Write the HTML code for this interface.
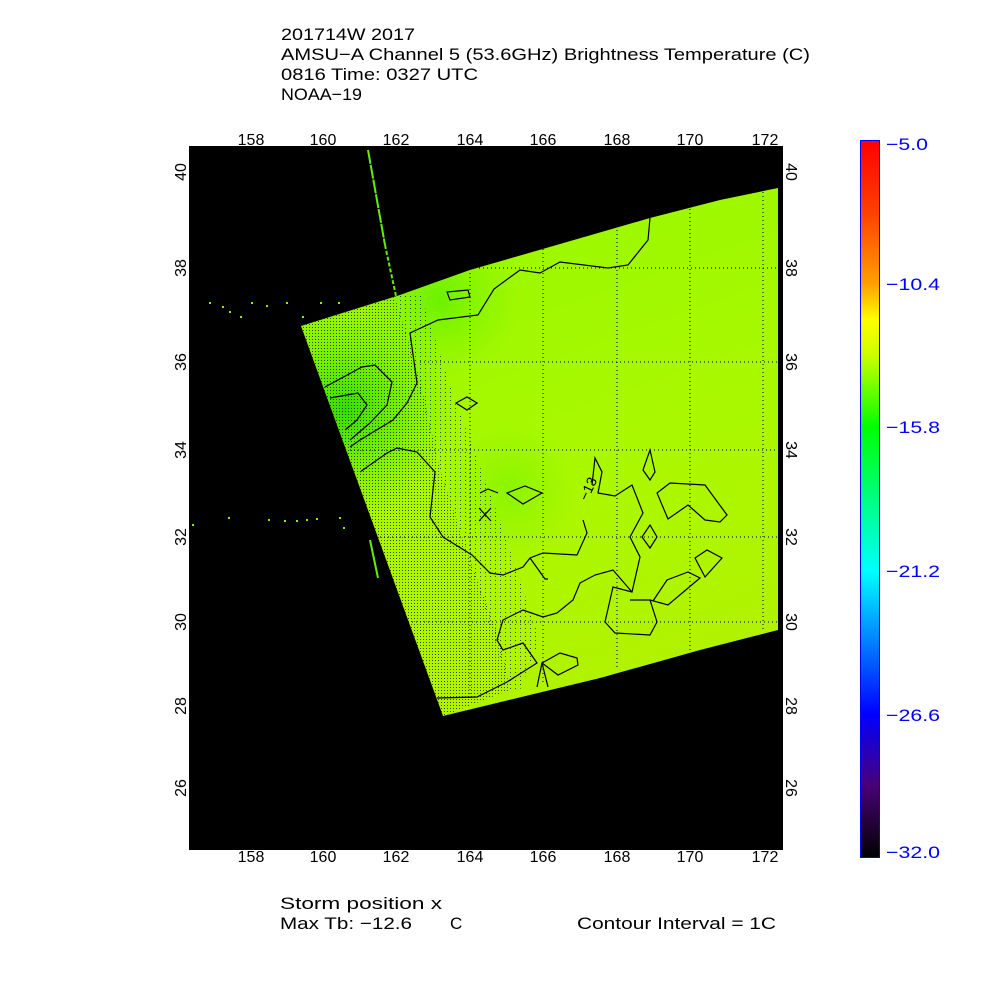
<!DOCTYPE html>
<html><head><meta charset="utf-8"><style>
html,body{margin:0;padding:0;background:#fff}
body{width:1000px;height:1000px;position:relative;overflow:hidden;font-family:"Liberation Sans",sans-serif}
svg text{font-family:"Liberation Sans",sans-serif}
</style></head><body>
<svg width="1000" height="1000" viewBox="0 0 1000 1000" xmlns="http://www.w3.org/2000/svg">
<defs>
<clipPath id="sw"><polygon points="301,326 400,295 470,270 560,244 650,218 720,200 778,188 778,630 700,650 600,678 443,716"/></clipPath>
<radialGradient id="gr" cx="345" cy="410" r="110" gradientUnits="userSpaceOnUse">
<stop offset="0" stop-color="#33dd00" stop-opacity="1"/><stop offset="1" stop-color="#66ee00" stop-opacity="0"/>
</radialGradient>
<radialGradient id="gr2" cx="440" cy="300" r="80" gradientUnits="userSpaceOnUse">
<stop offset="0" stop-color="#66f000" stop-opacity="0.9"/><stop offset="1" stop-color="#80f500" stop-opacity="0"/>
</radialGradient>
<radialGradient id="gr3" cx="510" cy="490" r="70" gradientUnits="userSpaceOnUse">
<stop offset="0" stop-color="#88f400" stop-opacity="0.9"/><stop offset="1" stop-color="#90f500" stop-opacity="0"/>
</radialGradient>
<linearGradient id="base" x1="0" y1="0" x2="0.3" y2="1">
<stop offset="0" stop-color="#90f800"/><stop offset="0.6" stop-color="#aaf800"/><stop offset="1" stop-color="#b4f000"/>
</linearGradient>
<pattern id="dots" width="3" height="3" patternUnits="userSpaceOnUse"><rect width="1" height="1" fill="#000"/></pattern>
<pattern id="dots2" width="5" height="4" patternUnits="userSpaceOnUse"><rect width="1" height="1" fill="#000"/></pattern>
<linearGradient id="cb" x1="0" y1="1" x2="0" y2="0">
<stop offset="0" stop-color="#000"/><stop offset="0.1" stop-color="#4a0078"/><stop offset="0.2" stop-color="#0000ff"/>
<stop offset="0.4" stop-color="#00ffff"/><stop offset="0.6" stop-color="#00ff00"/><stop offset="0.7" stop-color="#ccff00"/>
<stop offset="0.75" stop-color="#ffff00"/><stop offset="0.8" stop-color="#ffa000"/><stop offset="0.9" stop-color="#ff4000"/><stop offset="1" stop-color="#ff0000"/>
</linearGradient>
</defs>
<g font-size="17" fill="#000" lengthAdjust="spacingAndGlyphs">
<text x="281" y="40" textLength="134" lengthAdjust="spacingAndGlyphs">201714W 2017</text>
<text x="281" y="60" textLength="529" lengthAdjust="spacingAndGlyphs">AMSU−A Channel 5 (53.6GHz) Brightness Temperature (C)</text>
<text x="281" y="80" textLength="197" lengthAdjust="spacingAndGlyphs">0816 Time: 0327 UTC</text>
<text x="281" y="100" textLength="81" lengthAdjust="spacingAndGlyphs">NOAA−19</text>
</g>
<rect x="189" y="146" width="594" height="704" fill="#000"/>
<g clip-path="url(#sw)">
<rect x="189" y="146" width="594" height="704" fill="url(#base)"/>
<rect x="189" y="146" width="594" height="704" fill="url(#gr)"/>
<rect x="189" y="146" width="594" height="704" fill="url(#gr2)"/>
<rect x="189" y="146" width="594" height="704" fill="url(#gr3)"/>
<polygon points="301,326 395,297 420,380 440,470 470,560 500,640 510,690 443,716" fill="url(#dots)" opacity="0.7"/>
<polygon points="395,297 420,292 455,400 500,520 540,640 520,690 510,690 470,560 440,470" fill="url(#dots2)" opacity="0.7"/>
</g>
<g stroke="#000" stroke-width="1" stroke-dasharray="1,3" fill="none">
<line x1="470" y1="265" x2="470" y2="700"/><line x1="543" y1="245" x2="543" y2="685"/><line x1="617" y1="222" x2="617" y2="670"/><line x1="690" y1="205" x2="690" y2="650"/><line x1="763" y1="192" x2="763" y2="632"/>
<line x1="455" y1="268" x2="778" y2="268"/><line x1="420" y1="362" x2="778" y2="362"/><line x1="350" y1="450" x2="778" y2="450"/><line x1="360" y1="537" x2="778" y2="537"/><line x1="400" y1="622" x2="778" y2="622"/>
</g>
<g stroke="#000" stroke-width="1.2" fill="none">
<polyline points="650,218 648,240 628,265 608,268 560,262 540,273 520,270 494,289 478,315 438,320 410,333 417,383 407,403 393,420 360,440 350,447"/>
<polyline points="360,472 387,453 397,448 417,452 435,472 430,517 443,537 472,555 490,573 503,575 523,567 530,558 543,553 577,555 587,533 583,520"/>
<polyline points="592,485 595,458 602,472 598,493 615,496 632,485 643,513 630,537 640,557 632,592 613,587 605,622 615,633 650,635 657,622 650,600 630,600"/>
<polyline points="650,600 668,605 700,578 688,572 667,580 653,601"/>
<polygon points="657,493 670,483 705,485 727,515 720,522 705,520 688,505 668,519"/>
<polygon points="642,537 650,525 657,537 650,548"/>
<polygon points="643,470 650,450 655,472 650,480"/>
<polygon points="695,558 707,550 722,558 705,577"/>
<polygon points="507,493 525,486 542,493 523,504"/>
<polyline points="480,493 488,489 498,493"/>
<polygon points="456,403 467,397 477,403 467,410"/>
<polyline points="530,558 545,579 548,579"/>
<polyline points="437,698 477,697 507,682 537,663 523,643 503,650 497,640 503,620 523,610 543,617 557,613 573,600 580,583 595,575 613,570 632,592"/>
<polygon points="542,663 560,653 577,658 578,665 558,675"/>
<polyline points="537,687 542,663 548,687"/>
<polyline points="325,387 362,367 375,365 392,382 387,405 370,423 350,440"/>
<polyline points="330,398 358,393 367,405 357,420 345,430"/>
<polygon points="447,292 468,290 470,297 450,300"/>
<polygon points="448,267 453,262 458,268 453,272"/>
<line x1="479" y1="508" x2="491" y2="521"/><line x1="491" y1="508" x2="479" y2="521"/>
</g>
<text x="580" y="500" font-size="14" transform="rotate(-65 585 495)">−13</text>
<g stroke="#66ee00" stroke-width="2">
<line x1="368" y1="150" x2="385" y2="245" stroke-dasharray="14,1"/><line x1="385" y1="245" x2="396" y2="296" stroke-dasharray="4,2"/>
<line x1="370" y1="540" x2="378" y2="578"/>
</g>
<g fill="#88ee00">
<rect x="209" y="302" width="2" height="2"/><rect x="222" y="306" width="2" height="2"/><rect x="229" y="311" width="2" height="2"/><rect x="240" y="316" width="2" height="2"/><rect x="251" y="302" width="2" height="2"/><rect x="266" y="305" width="2" height="2"/><rect x="286" y="302" width="2" height="2"/><rect x="302" y="316" width="2" height="2"/><rect x="320" y="302" width="2" height="2"/><rect x="338" y="302" width="2" height="2"/>
<rect x="192" y="524" width="2" height="2"/><rect x="228" y="517" width="2" height="2"/><rect x="268" y="519" width="2" height="2"/><rect x="284" y="520" width="2" height="2"/><rect x="296" y="520" width="2" height="2"/><rect x="306" y="519" width="2" height="2"/><rect x="316" y="518" width="2" height="2"/><rect x="339" y="517" width="2" height="2"/><rect x="343" y="527" width="2" height="2"/>
</g>
<g font-size="16" fill="#000" text-anchor="middle">
<text x="251" y="145">158</text><text x="323" y="145">160</text><text x="396" y="145">162</text><text x="470" y="145">164</text><text x="543" y="145">166</text><text x="617" y="145">168</text><text x="690" y="145">170</text><text x="765" y="145">172</text>
<text x="251" y="862">158</text><text x="323" y="862">160</text><text x="396" y="862">162</text><text x="470" y="862">164</text><text x="543" y="862">166</text><text x="617" y="862">168</text><text x="690" y="862">170</text><text x="765" y="862">172</text>
</g>
<g font-size="16" fill="#000" text-anchor="middle">
<text transform="translate(186,172) rotate(-90)">40</text><text transform="translate(186,268) rotate(-90)">38</text><text transform="translate(186,362) rotate(-90)">36</text><text transform="translate(186,450) rotate(-90)">34</text><text transform="translate(186,537) rotate(-90)">32</text><text transform="translate(186,622) rotate(-90)">30</text><text transform="translate(186,706) rotate(-90)">28</text><text transform="translate(186,788) rotate(-90)">26</text>
<text transform="translate(786,172) rotate(90)">40</text><text transform="translate(786,268) rotate(90)">38</text><text transform="translate(786,362) rotate(90)">36</text><text transform="translate(786,450) rotate(90)">34</text><text transform="translate(786,537) rotate(90)">32</text><text transform="translate(786,622) rotate(90)">30</text><text transform="translate(786,706) rotate(90)">28</text><text transform="translate(786,788) rotate(90)">26</text>
</g>
<rect x="860.5" y="140.5" width="19" height="717" fill="url(#cb)" stroke="#0000ff" stroke-width="1"/>
<g fill="#0000ff" font-size="17">
<text x="886" y="150" textLength="42" lengthAdjust="spacingAndGlyphs">−5.0</text>
<text x="886" y="290" textLength="54" lengthAdjust="spacingAndGlyphs">−10.4</text>
<text x="886" y="433" textLength="54" lengthAdjust="spacingAndGlyphs">−15.8</text>
<text x="886" y="577" textLength="54" lengthAdjust="spacingAndGlyphs">−21.2</text>
<text x="886" y="721" textLength="54" lengthAdjust="spacingAndGlyphs">−26.6</text>
<text x="886" y="858" textLength="54" lengthAdjust="spacingAndGlyphs">−32.0</text>
</g>
<g font-size="17" fill="#000">
<text x="280" y="909" textLength="162" lengthAdjust="spacingAndGlyphs">Storm position x</text>
<text x="280" y="929" textLength="132" lengthAdjust="spacingAndGlyphs">Max Tb: −12.6</text>
<text x="450" y="929">C</text>
<text x="577" y="929" textLength="199" lengthAdjust="spacingAndGlyphs">Contour Interval = 1C</text>
</g>
</svg>
</body></html>
